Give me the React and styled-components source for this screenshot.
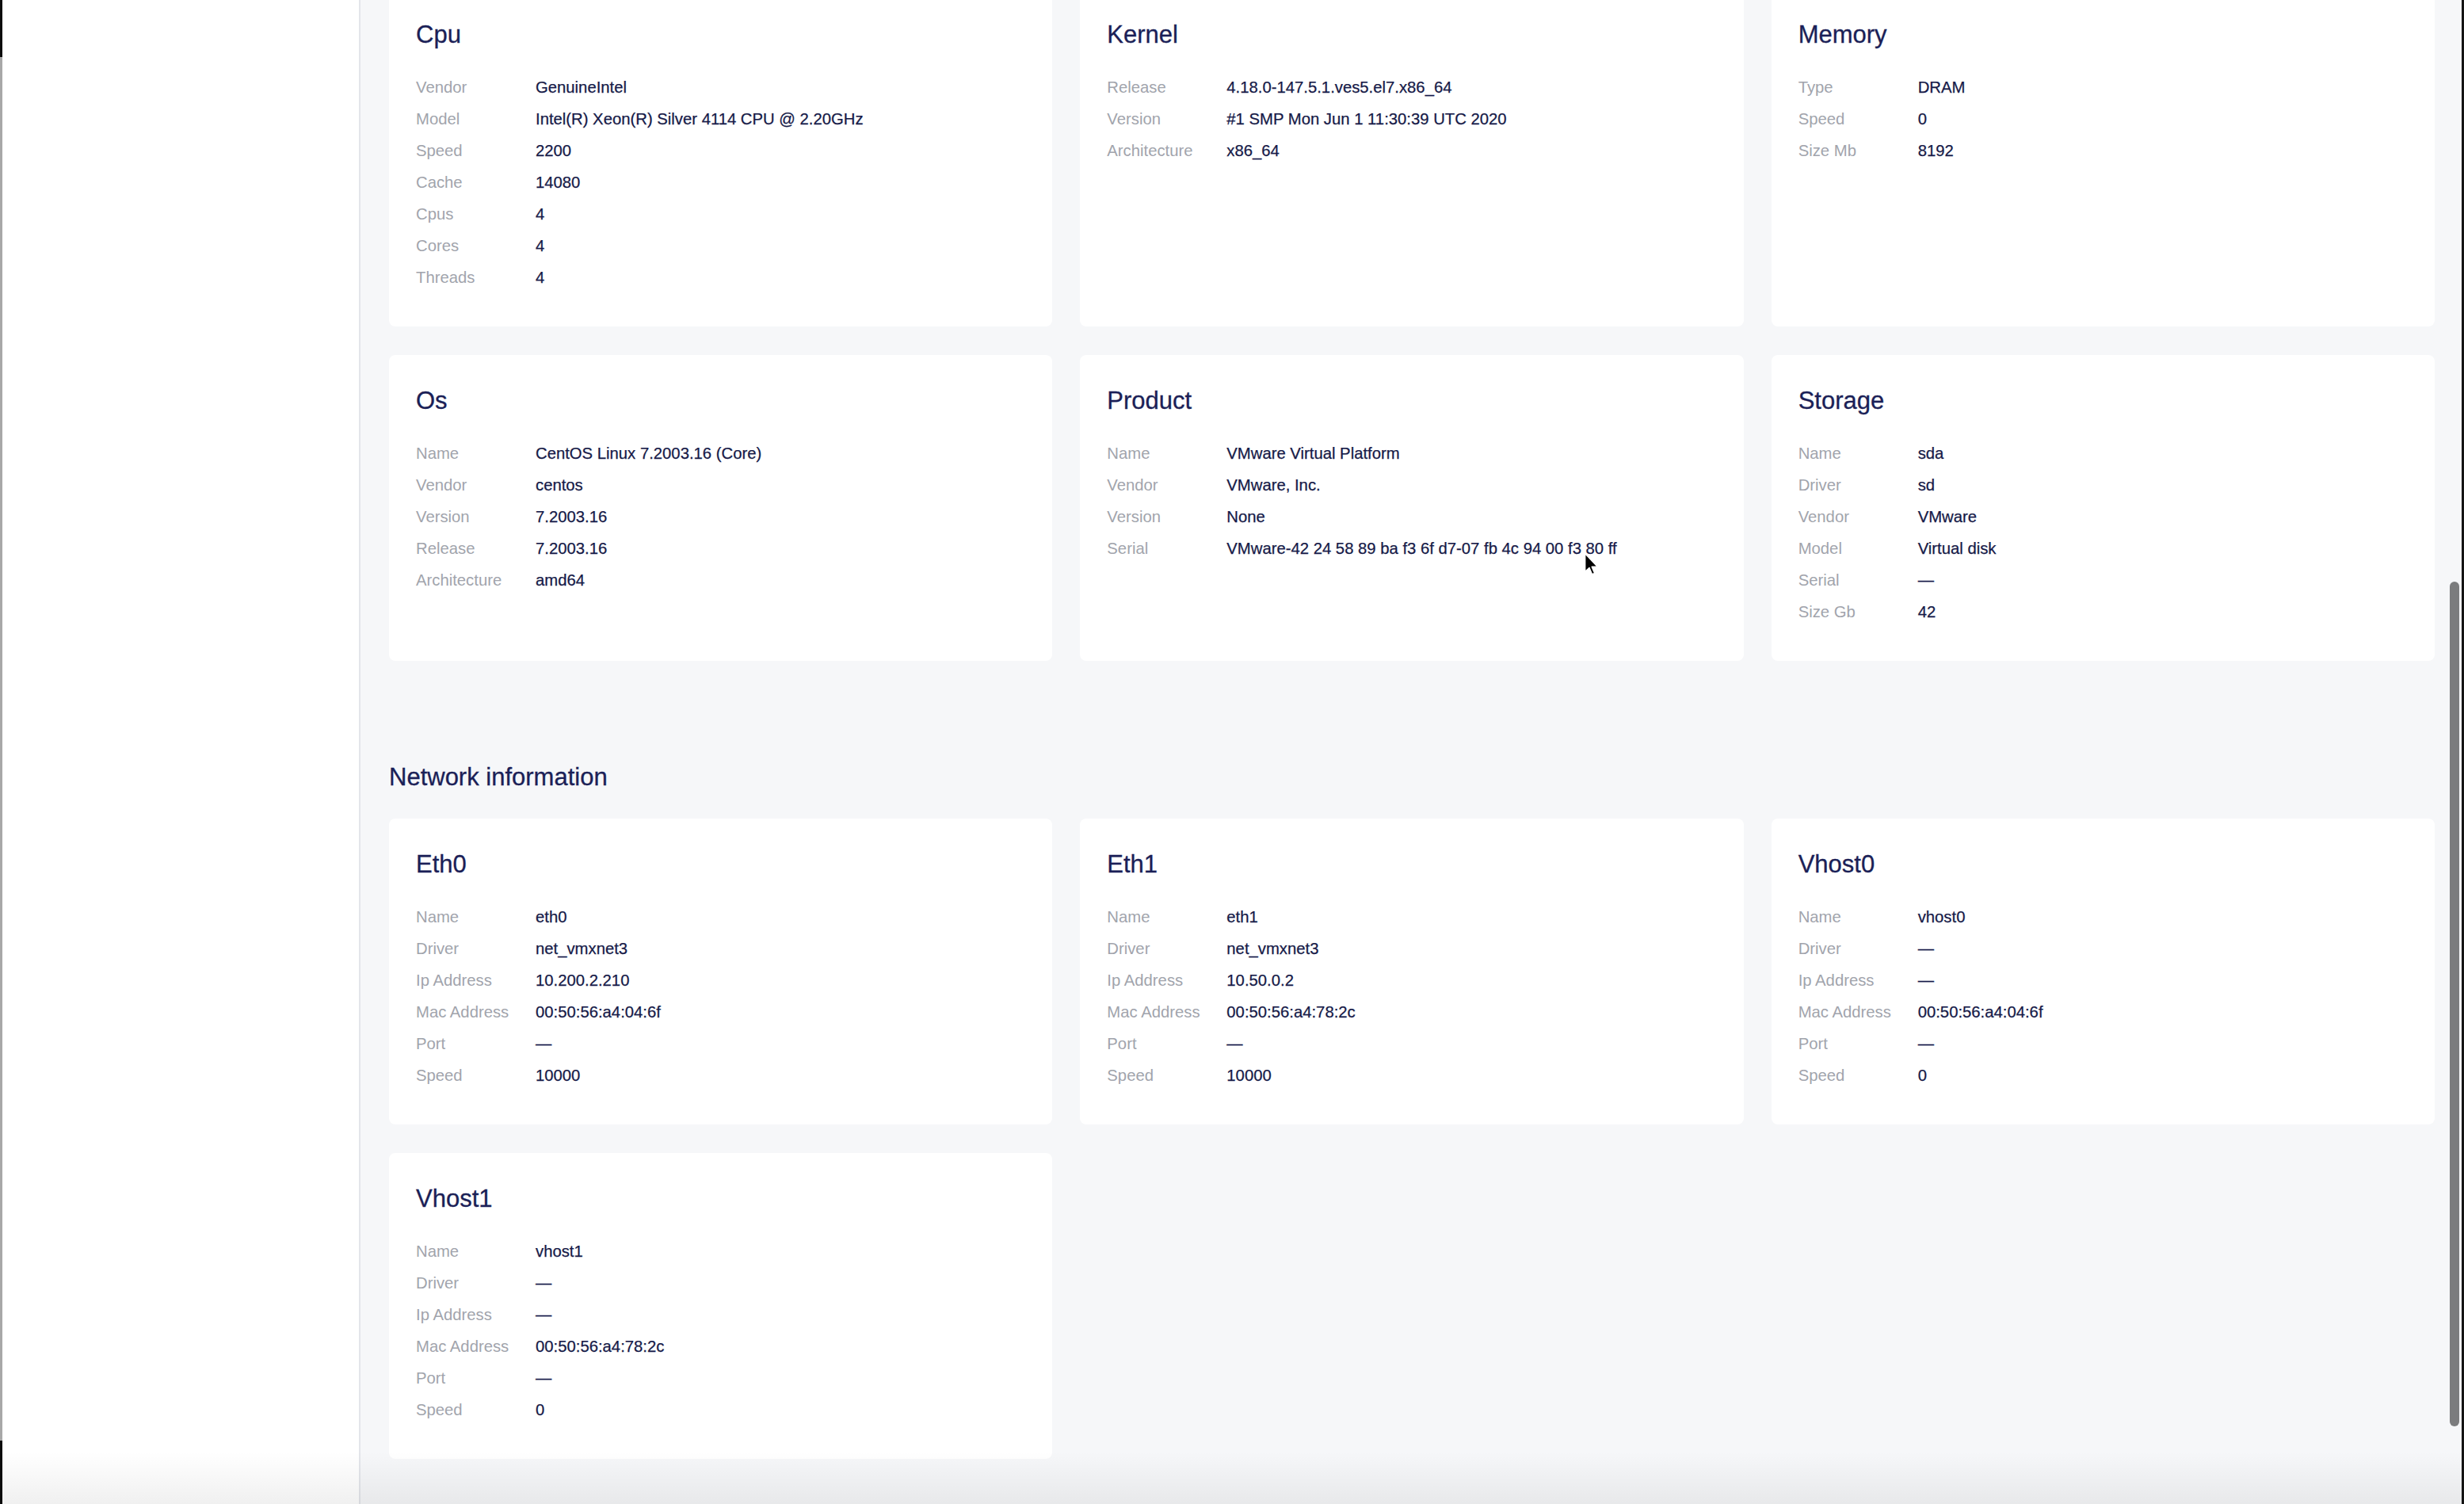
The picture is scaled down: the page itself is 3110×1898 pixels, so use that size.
import React from "react";
import styled, { createGlobalStyle } from "styled-components";

const GlobalStyle = createGlobalStyle`
  html, body {
    margin: 0;
    padding: 0;
    height: 100%;
    overflow: hidden;
  }
  body {
    font-family: "Liberation Sans", Arial, Helvetica, sans-serif;
  }
  * {
    box-sizing: border-box;
  }
`;

const Frame = styled.div`
  position: relative;
  display: flex;
  height: 100vh;
  overflow: hidden;
  background: #f6f7f9;
`;

const WindowEdge = styled.div`
  flex: 0 0 3px;
  background: linear-gradient(
    to bottom,
    #0c0c0c 0,
    #0c0c0c 72px,
    #a8a8a8 72px,
    #a8a8a8 calc(100% - 80px),
    #0c0c0c calc(100% - 80px)
  );
`;

const RightEdge = styled.div`
  flex: 0 0 3px;
  background: #141414;
`;

const Sidebar = styled.aside`
  flex: 0 0 452px;
  background: #ffffff;
  border-right: 2px solid #e3e5ea;
`;

const Main = styled.main`
  position: relative;
  flex: 1;
  min-width: 0;
  overflow: hidden;
  background: #f6f7f9;
`;

const Content = styled.div`
  margin-top: -14px;
  padding: 0 34px 60px 36px;
`;

const CardGrid = styled.div`
  display: grid;
  grid-template-columns: repeat(3, 1fr);
  column-gap: 35px;
  row-gap: 36px;
`;

const Card = styled.section`
  background: #ffffff;
  border-radius: 8px;
  padding: 40px 34px 42px;
`;

const CardTitle = styled.h3`
  margin: 0 0 28px;
  font-size: 31px;
  line-height: 36px;
  font-weight: 400;
  color: #1b1f57;
  -webkit-text-stroke: 0.3px #1b1f57;
`;

const SectionTitle = styled.h2`
  margin: 129px 0 34px;
  font-size: 31px;
  line-height: 36px;
  font-weight: 400;
  color: #1b1f57;
  -webkit-text-stroke: 0.3px #1b1f57;
`;

const Row = styled.div`
  display: grid;
  grid-template-columns: 151px 1fr;
  align-items: center;
  height: 40px;
  font-size: 20.3px;
  white-space: nowrap;
`;

const Label = styled.span`
  color: #a1a4ac;
`;

const Value = styled.span`
  color: #161a48;
  -webkit-text-stroke: 0.25px #161a48;
`;

const ScrollThumb = styled.div`
  position: absolute;
  right: 3px;
  top: 734px;
  width: 12px;
  height: 1066px;
  border-radius: 6px;
  background: #7b7c7e;
`;

const BottomShade = styled.div`
  position: absolute;
  left: 3px;
  right: 3px;
  bottom: 0;
  height: 66px;
  pointer-events: none;
  background: linear-gradient(to bottom, rgba(0, 0, 0, 0), rgba(0, 0, 0, 0.06));
`;

const Cursor = styled.svg`
  position: absolute;
  left: 1999px;
  top: 697px;
  width: 19px;
  height: 30px;
  pointer-events: none;
`;

const hardware = [
  {
    title: "Cpu",
    rows: [
      ["Vendor", "GenuineIntel"],
      ["Model", "Intel(R) Xeon(R) Silver 4114 CPU @ 2.20GHz"],
      ["Speed", "2200"],
      ["Cache", "14080"],
      ["Cpus", "4"],
      ["Cores", "4"],
      ["Threads", "4"]
    ]
  },
  {
    title: "Kernel",
    rows: [
      ["Release", "4.18.0-147.5.1.ves5.el7.x86_64"],
      ["Version", "#1 SMP Mon Jun 1 11:30:39 UTC 2020"],
      ["Architecture", "x86_64"]
    ]
  },
  {
    title: "Memory",
    rows: [
      ["Type", "DRAM"],
      ["Speed", "0"],
      ["Size Mb", "8192"]
    ]
  },
  {
    title: "Os",
    rows: [
      ["Name", "CentOS Linux 7.2003.16 (Core)"],
      ["Vendor", "centos"],
      ["Version", "7.2003.16"],
      ["Release", "7.2003.16"],
      ["Architecture", "amd64"]
    ]
  },
  {
    title: "Product",
    rows: [
      ["Name", "VMware Virtual Platform"],
      ["Vendor", "VMware, Inc."],
      ["Version", "None"],
      ["Serial", "VMware-42 24 58 89 ba f3 6f d7-07 fb 4c 94 00 f3 80 ff"]
    ]
  },
  {
    title: "Storage",
    rows: [
      ["Name", "sda"],
      ["Driver", "sd"],
      ["Vendor", "VMware"],
      ["Model", "Virtual disk"],
      ["Serial", "—"],
      ["Size Gb", "42"]
    ]
  }
];

const nic = (title, name, driver, ip, mac, speed) => ({
  title,
  rows: [
    ["Name", name],
    ["Driver", driver],
    ["Ip Address", ip],
    ["Mac Address", mac],
    ["Port", "—"],
    ["Speed", speed]
  ]
});

const network = [
  nic("Eth0", "eth0", "net_vmxnet3", "10.200.2.210", "00:50:56:a4:04:6f", "10000"),
  nic("Eth1", "eth1", "net_vmxnet3", "10.50.0.2", "00:50:56:a4:78:2c", "10000"),
  nic("Vhost0", "vhost0", "—", "—", "00:50:56:a4:04:6f", "0"),
  nic("Vhost1", "vhost1", "—", "—", "00:50:56:a4:78:2c", "0")
];

function InfoCard({ title, rows }) {
  return (
    <Card>
      <CardTitle>{title}</CardTitle>
      {rows.map(([label, value]) => (
        <Row key={label}>
          <Label>{label}</Label>
          <Value>{value}</Value>
        </Row>
      ))}
    </Card>
  );
}

export default function App() {
  return (
    <>
      <GlobalStyle />
      <Frame>
        <WindowEdge />
        <Sidebar />
        <Main>
          <Content>
            <CardGrid>
              {hardware.map(card => (
                <InfoCard key={card.title} {...card} />
              ))}
            </CardGrid>
            <SectionTitle>Network information</SectionTitle>
            <CardGrid>
              {network.map(card => (
                <InfoCard key={card.title} {...card} />
              ))}
            </CardGrid>
          </Content>
          <ScrollThumb />
        </Main>
        <RightEdge />
        <BottomShade />
        <Cursor viewBox="0 0 12 19">
          <path
            d="M1 1 L1 15.5 L4.4 12.4 L6.6 17.6 L8.7 16.7 L6.5 11.6 L11 11.6 Z"
            fill="#000"
            stroke="#fff"
            strokeWidth="1"
            strokeLinejoin="round"
          />
        </Cursor>
      </Frame>
    </>
  );
}
